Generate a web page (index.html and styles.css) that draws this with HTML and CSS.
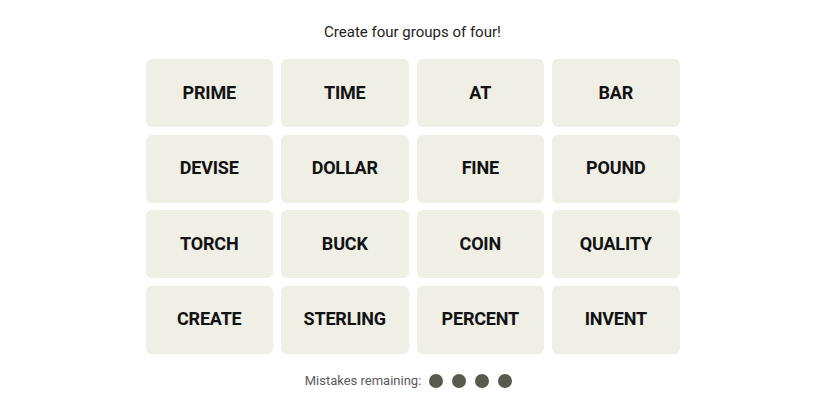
FILE: index.html
```html
<!DOCTYPE html>
<html lang="en">
  <head>
    <meta charset="UTF-8" />
    <title>Connections</title>
    <link rel="stylesheet" href="styles.css">
  </head>
  <body>
    <div class="game">
      <p class="g-title">Create four groups of four!</p>
      <div class="g-board">
        <div class="g-card">PRIME</div>
        <div class="g-card">TIME</div>
        <div class="g-card">AT</div>
        <div class="g-card">BAR</div>
        <div class="g-card">DEVISE</div>
        <div class="g-card">DOLLAR</div>
        <div class="g-card">FINE</div>
        <div class="g-card">POUND</div>
        <div class="g-card">TORCH</div>
        <div class="g-card">BUCK</div>
        <div class="g-card">COIN</div>
        <div class="g-card">QUALITY</div>
        <div class="g-card">CREATE</div>
        <div class="g-card">STERLING</div>
        <div class="g-card">PERCENT</div>
        <div class="g-card">INVENT</div>
      </div>
      <div class="g-mistakes">
        <span>Mistakes remaining:</span>
        <span class="g-dots"><i></i><i></i><i></i><i></i></span>
      </div>
    </div>
  </body>
</html>
```

FILE: styles.css
```css
* {
  margin: 0;
  padding: 0;
  box-sizing: border-box;
}
body {
  background-color: #fff;
  font-family: Roboto, 'Liberation Sans', sans-serif;
  color: #121212;
}
.game {
  display: flex;
  flex-direction: column;
  align-items: center;
  padding-top: 22px;
}
.g-title {
  font-size: 15px;
  line-height: 20px;
  font-weight: 400;
  color: #222;
}
.g-board {
  display: grid;
  grid-template-columns: repeat(4, 127.5px);
  grid-auto-rows: 68px;
  column-gap: 8px;
  row-gap: 7.5px;
  margin-top: 17px;
}
.g-card {
  display: flex;
  align-items: center;
  justify-content: center;
  padding-bottom: 2px;
  background-color: #efefe6;
  border-radius: 6px;
  font-size: 18px;
  font-weight: 700;
  letter-spacing: -0.2px;
  color: #121212;
}
.g-mistakes {
  display: flex;
  align-items: center;
  margin-top: 17px;
  padding-right: 8px;
  height: 20px;
  font-size: 13px;
  font-weight: 400;
  color: #5a5a5a;
}
.g-dots {
  display: flex;
  gap: 9px;
  margin-left: 8px;
}
.g-dots i {
  width: 14px;
  height: 14px;
  border-radius: 50%;
  background-color: #5a594e;
}
```
